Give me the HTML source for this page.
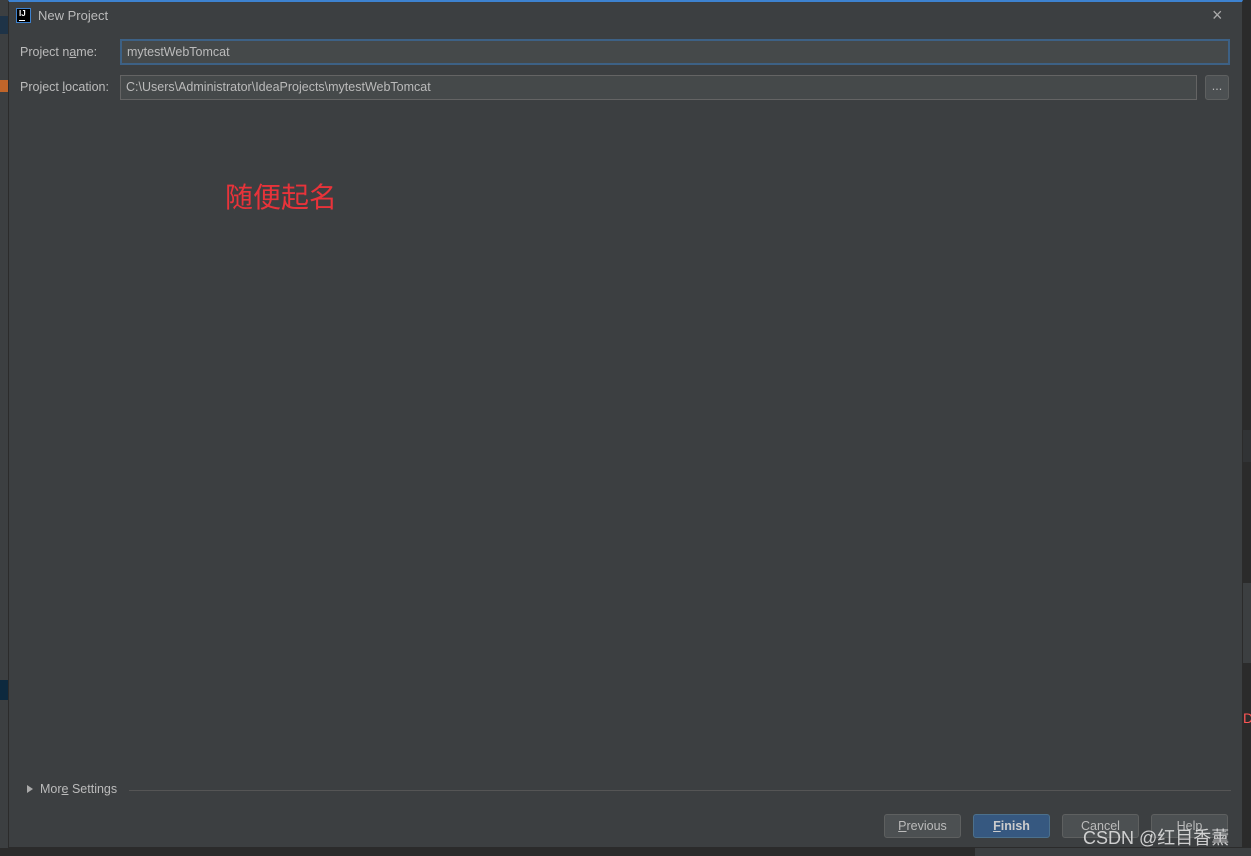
<!DOCTYPE html>
<html><head><meta charset="utf-8"><style>
*{margin:0;padding:0;box-sizing:border-box}
body{width:1251px;height:856px;background:#2b2b2b;position:relative;overflow:hidden;font-family:"Liberation Sans","Noto Sans CJK SC",sans-serif;font-size:13px;color:#bbbbbb}
.abs{position:absolute}
#dlg{left:8px;top:0;width:1235px;height:848px;background:#3c3f41;border:1px solid #2b2b2b;border-top:2px solid #3d82d0}
.lbl{color:#bbbbbb;font-size:12.5px}
.field{background:#45494a;border:1px solid #646464;color:#bbbbbb;font-size:12.5px;padding-left:5px;line-height:22px}
.btn{border:1px solid #5e6060;border-radius:3px;background:#4c5052;color:#bbbbbb;text-align:center;line-height:22px;font-size:12.5px}
</style></head><body>
<div class="abs" style="left:0;top:0;width:8px;height:856px;background:#3c3f41"></div>
<div class="abs" style="left:0;top:16px;width:8px;height:18px;background:#1e3347"></div>
<div class="abs" style="left:0;top:80px;width:8px;height:12px;background:#c0652a"></div>
<div class="abs" style="left:0;top:680px;width:8px;height:20px;background:#0d293e"></div>
<div class="abs" style="left:0;top:848px;width:1251px;height:8px;background:#2b2b2b"></div>
<div class="abs" style="left:975px;top:848px;width:276px;height:8px;background:#3c3f41"></div>
<div class="abs" style="left:1243px;top:430px;width:8px;height:32px;background:#313335"></div>
<div class="abs" style="left:1243px;top:583px;width:8px;height:80px;background:#3c3f41"></div>
<div class="abs" style="left:1243px;top:710px;width:8px;height:18px;color:#ff5555;font-size:14px">D</div>

<div id="dlg" class="abs">
 <div class="abs" style="left:7px;top:6px;width:15px;height:15px;background:#000;border:1px solid #3d82d0;color:#fff;font-size:8px;font-weight:bold;line-height:10px;padding-left:2px">IJ<div style="width:6px;height:1px;background:#fff;margin-top:1px"></div></div>
 <div class="abs" style="left:29px;top:6px;font-size:13px;color:#bbbbbb">New Project</div>
 <div class="abs" style="left:1203px;top:3px;font-size:18px;color:#aaa">×</div>

 <div class="abs lbl" style="left:11px;top:43px">Project n<u>a</u>me:</div>
 <div class="abs field" style="left:111px;top:37px;width:1110px;height:26px;border:2px solid #3d6185;line-height:22px;padding-left:5px;color:#bbbbbb">mytestWebTomcat</div>

 <div class="abs lbl" style="left:11px;top:78px">Project <u>l</u>ocation:</div>
 <div class="abs field" style="left:111px;top:73px;width:1077px;height:25px">C:\Users\Administrator\IdeaProjects\mytestWebTomcat</div>
 <div class="abs btn" style="left:1196px;top:73px;width:24px;height:25px;line-height:20px">...</div>

 <div class="abs" style="left:216px;top:174px;color:#e8333a;font-size:28px">随便起名</div>

 <div class="abs" style="left:18px;top:783px;width:0;height:0;border-top:4px solid transparent;border-bottom:4px solid transparent;border-left:6px solid #aaa"></div>
 <div class="abs lbl" style="left:31px;top:780px">Mor<u>e</u> Settings</div>
 <div class="abs" style="left:120px;top:788px;width:1102px;height:1px;background:#555"></div>

 <div class="abs btn" style="left:875px;top:812px;width:77px;height:24px"><u>P</u>revious</div>
 <div class="abs btn" style="left:964px;top:812px;width:77px;height:24px;background:#365880;border-color:#4c708c;font-weight:bold;color:#ccc"><u>F</u>inish</div>
 <div class="abs btn" style="left:1053px;top:812px;width:77px;height:24px">Cancel</div>
 <div class="abs btn" style="left:1142px;top:812px;width:77px;height:24px">Help</div>
</div>
<div class="abs" style="left:1083px;top:824px;color:#e8e8e8;font-size:18px;opacity:.85">CSDN @红目香薰</div>
</body></html>
